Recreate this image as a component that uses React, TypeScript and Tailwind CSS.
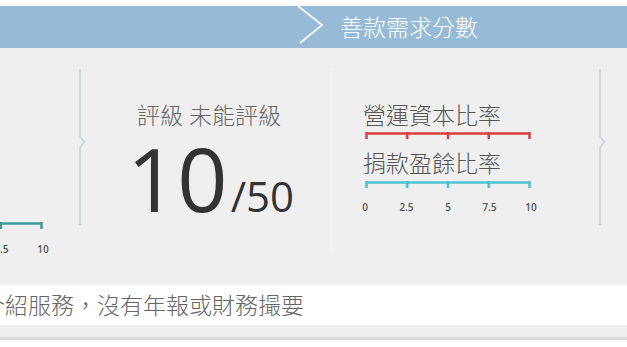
const cjk = "font-['Open_Sans','Noto_Sans_CJK_TC',sans-serif]";

function Scale({ color }: { color: string }) {
  return (
    <svg width="166" height="8" className="block">
      <line x1="1.5" y1="1.5" x2="164.5" y2="1.5" stroke={color} strokeWidth="2.5" />
      {[1.5, 42.25, 83, 123.75, 164.5].map((x) => (
        <line key={x} x1={x} y1="0" x2={x} y2="7" stroke={color} strokeWidth="2.5" />
      ))}
    </svg>
  );
}

function ScaleLabels() {
  return (
    <div className="flex w-[186px] -ml-[10px] justify-between text-[10px] leading-[12px] font-semibold text-[#555] font-['Open_Sans',sans-serif]">
      {["0", "2.5", "5", "7.5", "10"].map((l) => (
        <span key={l} className="w-[20px] text-center">
          {l}
        </span>
      ))}
    </div>
  );
}

function Divider() {
  return (
    <svg width="8" height="156" className="block mt-[21px] shrink-0">
      <path
        d="M2 0 V66 Q2 68 4 70.5 L6 73 L4 75.5 Q2 78 2 80 V156"
        fill="none"
        stroke="#cfd6dd"
        strokeWidth="2"
      />
    </svg>
  );
}

export default function App() {
  return (
    <div className={`w-[627px] h-[347px] bg-white pt-[6px] overflow-hidden font-light ${cjk}`}>
      {/* header */}
      <div className="h-[42px] bg-[#97bbd6] flex items-center pl-[296px]">
        <svg width="30" height="42" className="block shrink-0">
          <polyline
            points="2,0 26,19 4,37"
            fill="none"
            stroke="white"
            strokeOpacity="0.85"
            strokeWidth="2"
          />
        </svg>
        <span className="ml-[14px] text-white text-[23px] leading-[30px]">善款需求分數</span>
      </div>

      {/* slides */}
      <div className="h-[237px] bg-[#efefef] flex">
        <div className="w-[78px] shrink-0 overflow-hidden pt-[174px]">
          <div className="-ml-[123px]">
            <Scale color="#3a9a98" />
            <div className="mt-[13px]">
              <ScaleLabels />
            </div>
          </div>
        </div>

        <Divider />

        <div className="w-[245px] shrink-0 pl-[51px] pt-[52px]">
          <div className="text-[23px] leading-[30px] text-[#666]">評級 未能評級</div>
          <div className="flex items-baseline font-['Open_Sans',sans-serif] font-normal text-[#333] -ml-[10px] mt-[4px]">
            <span className="text-[88px] leading-[88px]">10</span>
            <span className="text-[42px] leading-[42px] ml-[3px]">/50</span>
          </div>
        </div>

        <div className="w-[1px] h-[187px] mt-[20px] bg-white shrink-0" />

        <div className="w-[266px] shrink-0 pl-[31px] pt-[52px]">
          <div className="text-[23px] leading-[30px] text-[#555]">營運資本比率</div>
          <div className="mt-[2px] ml-[2px]">
            <Scale color="#d9413f" />
          </div>
          <div className="mt-[8px] text-[23px] leading-[30px] text-[#555]">捐款盈餘比率</div>
          <div className="mt-[3px] ml-[2px]">
            <Scale color="#4cc3d0" />
          </div>
          <div className="mt-[12px] ml-[2px]">
            <ScaleLabels />
          </div>
        </div>

        <Divider />
      </div>

      {/* note */}
      <div className="h-[40px] bg-white flex items-center overflow-hidden">
        <span className="-ml-[18px] whitespace-nowrap text-[23px] leading-[30px] text-[#666]">
          介紹服務，沒有年報或財務撮要
        </span>
      </div>
      <div className="h-[12px] bg-[#efefef]" />
      <div className="h-[3px] bg-[#dcdcdc]" />
    </div>
  );
}
